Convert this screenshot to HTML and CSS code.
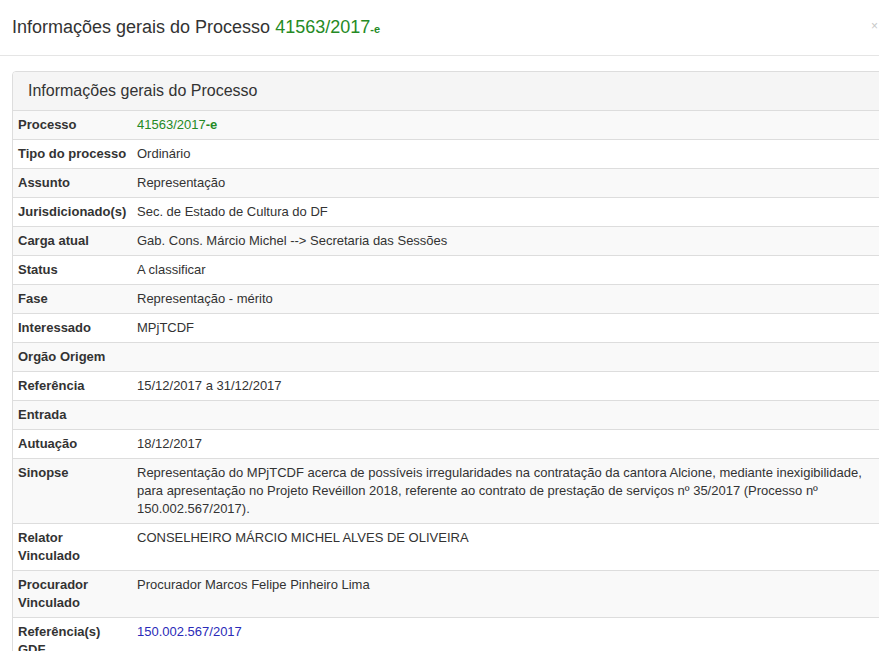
FILE: index.html
```html
<!DOCTYPE html>
<html lang="pt-BR">
<head>
    <meta charset="UTF-8">
    <meta name="viewport" content="width=device-width, initial-scale=1.0">
    <title>Informações gerais do Processo</title>
    <link rel="stylesheet" href="styles.css">
</head>
<body>
    <div class="modal">
        <div class="modal-header">
            <h4 class="modal-title">Informações gerais do Processo <span class="proc">41563/2017<small>-e</small></span></h4>
            <span class="close">&times;</span>
        </div>

        <div class="modal-body">
            <div class="panel">
                <div class="panel-heading">Informações gerais do Processo</div>
                <table class="info">
                    <tbody>
                        <tr>
                            <th>Processo</th>
                            <td><span class="proc">41563/2017<b>-e</b></span></td>
                        </tr>
                        <tr>
                            <th>Tipo do processo</th>
                            <td>Ordinário</td>
                        </tr>
                        <tr>
                            <th>Assunto</th>
                            <td>Representação</td>
                        </tr>
                        <tr>
                            <th>Jurisdicionado(s)</th>
                            <td>Sec. de Estado de Cultura do DF</td>
                        </tr>
                        <tr>
                            <th>Carga atual</th>
                            <td>Gab. Cons. Márcio Michel --&gt; Secretaria das Sessões</td>
                        </tr>
                        <tr>
                            <th>Status</th>
                            <td>A classificar</td>
                        </tr>
                        <tr>
                            <th>Fase</th>
                            <td>Representação - mérito</td>
                        </tr>
                        <tr>
                            <th>Interessado</th>
                            <td>MPjTCDF</td>
                        </tr>
                        <tr>
                            <th>Orgão Origem</th>
                            <td></td>
                        </tr>
                        <tr>
                            <th>Referência</th>
                            <td>15/12/2017 a 31/12/2017</td>
                        </tr>
                        <tr>
                            <th>Entrada</th>
                            <td></td>
                        </tr>
                        <tr>
                            <th>Autuação</th>
                            <td>18/12/2017</td>
                        </tr>
                        <tr>
                            <th>Sinopse</th>
                            <td>Representação do MPjTCDF acerca de possíveis irregularidades na contratação da cantora Alcione, mediante inexigibilidade, para apresentação no Projeto Revéillon 2018, referente ao contrato de prestação de serviços nº 35/2017 (Processo nº 150.002.567/2017).</td>
                        </tr>
                        <tr>
                            <th>Relator Vinculado</th>
                            <td>CONSELHEIRO MÁRCIO MICHEL ALVES DE OLIVEIRA</td>
                        </tr>
                        <tr>
                            <th>Procurador Vinculado</th>
                            <td>Procurador Marcos Felipe Pinheiro Lima</td>
                        </tr>
                        <tr>
                            <th>Referência(s) GDF</th>
                            <td><a href="#" class="ref">150.002.567/2017</a></td>
                        </tr>
                    </tbody>
                </table>
            </div>
        </div>
    </div>
</body>
</html>
```

FILE: styles.css
```css
* {
    box-sizing: border-box;
}
body {
    margin: 0;
    font-family: "Liberation Sans", Arial, sans-serif;
    font-size: 13px;
    line-height: 18px;
    color: #333;
    background: #fff;
    overflow: hidden;
}
.modal {
    width: 900px;
    background: #fff;
}
.modal-header {
    position: relative;
    padding: 15px 12px;
    border-bottom: 1px solid #e5e5e5;
}
.modal-title {
    margin: 0;
    font-size: 18px;
    font-weight: normal;
    line-height: 25px;
    height: 25px;
}
.modal-title small {
    font-size: 11px;
    font-weight: bold;
    line-height: 1;
}
.close {
    position: absolute;
    top: 19px;
    left: 871px;
    font-size: 12px;
    line-height: 14px;
    color: #c8c8c8;
}
.proc {
    color: #258a25;
}
.modal-body {
    padding: 15px 12px;
}
.panel {
    border: 1px solid #ddd;
    border-radius: 4px;
    background: #fff;
}
.panel-heading {
    padding: 10px 15px;
    font-size: 16px;
    line-height: 18px;
    background: #f5f5f5;
    border-bottom: 1px solid #ddd;
    border-radius: 3px 3px 0 0;
}
.info {
    width: 100%;
    border-collapse: collapse;
}
.info th, .info td {
    padding: 5px;
    text-align: left;
    vertical-align: top;
    border-top: 1px solid #ddd;
}
.info tr:first-child th, .info tr:first-child td {
    border-top: none;
}
.info th {
    width: 119px;
    font-weight: bold;
}
.info tr:nth-child(odd) {
    background: #f9f9f9;
}
.ref {
    color: #2a2ab8;
    text-decoration: none;
}
```
